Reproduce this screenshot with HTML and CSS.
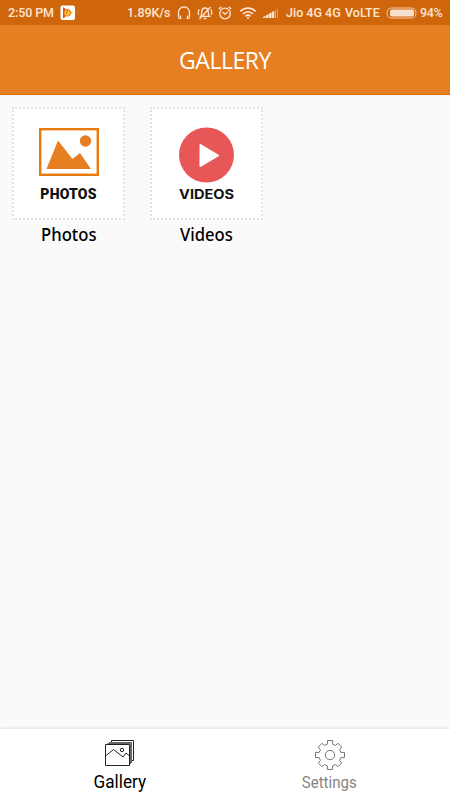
FILE: index.html
```html
<!DOCTYPE html>
<html lang="en">
<head>
<meta charset="utf-8">
<title>Gallery</title>
<link rel="stylesheet" href="styles.css">
</head>
<body>
<div class="status">
  <span class="time">2:50 PM</span>
  <svg class="player" width="16" height="16" viewBox="0 0 16 16"><rect x=".5" y=".5" width="14.5" height="14.5" rx="2" fill="#fff"/><path d="M3 2.3L13.2 7.8L3 13.2Z" fill="#f8bf23"/><path d="M3 2.3L5 3.6V12L3 13.2Z" fill="#e8402c"/><circle cx="7.2" cy="7.8" r="3.2" fill="#fbd12c" stroke="#ee7b22" stroke-width="1.2"/><path d="M6.7 9V6.7L8.4 6.2" fill="none" stroke="#e66420"/></svg>
  <span class="speed">1.89K/s</span>
  <svg class="icon headset" width="14" height="14" viewBox="0 0 14 14"><path d="M1.500 11.500V6.500C1.500 3 4 1 7 1s5.500 2 5.500 5.500V11.500"/><path d="M1.500 12.300h3M3.500 9.500v3M12.500 12.300h-3M10.500 9.500v3"/></svg>
  <svg class="icon muted" width="16" height="14" viewBox="0 0 16 14"><path d="M3.600 10.400H12.400C11.200 9.200 11.500 7.500 11.200 5.500C11 3.200 9.800 2 8 2S5 3.200 4.800 5.500C4.500 7.500 4.800 9.200 3.600 10.400ZM6.700 12.500h2.600M2.300 3.500C1 5.300 1 7.200 1.800 9M13.700 3.500c1.300 1.800 1.300 3.700.5 5.500M2.500 13L13.500 1"/></svg>
  <svg class="icon alarm" width="14" height="14" viewBox="0 0 14 14"><circle cx="7" cy="7.500" r="5.300"/><path d="M4.500 6l2.400 2.200L9.700 6M.8 3L3.500 .8M13.200 3L10.500 .8"/></svg>
  <svg class="icon wifi" width="18" height="14" viewBox="0 0 18 14"><path d="M1.300 5.500C5.500 .9 12.500 .9 16.700 5.500M4 8c2.800-3 7.200-3 10 0M6.500 10.300c1.500-1.400 3.500-1.400 5 0" stroke-width="1.700"/><circle cx="9" cy="12" r="1" fill="#fce5d2" stroke="none"/></svg>
  <svg class="signal" width="16" height="12" viewBox="0 0 16 12"><path d="M0 11V10L2.600 8.800V11ZM3 11V8.500L5.600 7V11ZM6 11V6.800L8.600 5.300V11ZM9 11V5L11.300 3.700V11Z" fill="#fce5d2"/><path d="M12 11V3l1-.5V11ZM14 11V1.700l1-.7v10Z" fill="#e4a06c"/></svg>
  <span class="carrier">Jio 4G 4G</span>
  <span class="volte">VoLTE</span>
  <svg class="battery" width="32" height="12" viewBox="0 0 32 12"><rect x="1" y="1" width="29" height="10" rx="4.500" fill="none" stroke="#f4cda9"/><rect x="4" y="2.500" width="24" height="7" rx="2" fill="#f9e0cc"/></svg>
  <span class="percent">94%</span>
</div>
<header class="header"><h1 class="title">GALLERY</h1></header>
<main class="grid">
  <div class="item">
    <div class="tile">
      <svg class="photo" width="60" height="48" viewBox="0 0 60 48"><rect x="1.200" y="1.200" width="57.600" height="45.600" fill="#fff" stroke="#e67a0f" stroke-width="2.400"/><path d="M7.500 41L19 12.500L33.500 31L41 25L52 41Z" fill="#e67e22"/><circle cx="46.500" cy="13" r="5.700" fill="#e67e22"/></svg>
      <span class="caption photos-caption">PHOTOS</span>
    </div>
    <span class="label">Photos</span>
  </div>
  <div class="item">
    <div class="tile">
      <svg class="video" width="56" height="56" viewBox="0 0 56 56"><circle cx="27.500" cy="28" r="27.500" fill="#e75757"/><path d="M21.500 18v21L39 28.500Z" fill="#fff" stroke="#fff" stroke-width="2" stroke-linejoin="round"/></svg>
      <span class="caption videos-caption">VIDEOS</span>
    </div>
    <span class="label">Videos</span>
  </div>
</main>
<nav class="tabs">
  <div class="tab active">
    <svg width="32" height="30" viewBox="0 0 32 30" fill="none" stroke="#222"><path d="M5.500 4V2.500H27.500V22.500H26M3.500 5V4H5M7.500 2V.5H29.500V20.500H28"/><path d="M5 2.500H27.500V23M3.500 3.500H26.500V24" stroke="#666"/><path d="M1.500 4.500H25.500V25.500H1.500ZM1.500 16L9.500 9.500L19 17L22 13L25.500 16"/><circle cx="18" cy="10" r="1.700"/></svg>
    <span class="tab-label">Gallery</span>
  </div>
  <div class="tab settings">
    <svg width="32" height="30" viewBox="-16 -15 32 30" fill="none" stroke="#777"><path stroke-linejoin="round" d="M-2.600-14.500H2.600V-10.800L5.400-9.600L8-11.700L11.700-8L9.600-5.400L10.800-2.600H14.500V2.600H10.800L9.600 5.400L11.700 8L8 11.700L5.400 9.600L2.600 10.800V14.500H-2.600V10.800L-5.400 9.600L-8 11.700L-11.700 8L-9.600 5.400L-10.800 2.600H-14.500V-2.600H-10.800L-9.600-5.400L-11.700-8L-8-11.700L-5.400-9.600L-2.600-10.800Z"/><circle r="4.700"/></svg>
    <span class="tab-label">Settings</span>
  </div>
</nav>
</body>
</html>
```
FILE: styles.css
```css
* { box-sizing: border-box; }
body {
  margin: 0;
  height: 800px;
  display: flex;
  flex-direction: column;
  overflow: hidden;
  background: #fafafa;
  font-family: Roboto, sans-serif;
}
svg { display: block; flex: none; }

.status {
  height: 25px;
  flex: none;
  display: flex;
  align-items: center;
  padding-left: 8px;
  background: #cf660c;
  color: #fce5d2;
  font-size: 12.5px;
  font-weight: 500;
  line-height: 27px;
  white-space: nowrap;
}
.status span { flex: none; }
.time { width: 52px; letter-spacing: -.1px; }
.player { margin-right: 51px; }
.speed { width: 50px; letter-spacing: -.1px; }
.icon { fill: none; stroke: #fce5d2; stroke-width: 1.3; }
.headset { margin-right: 6px; }
.muted { margin-right: 5px; }
.alarm { margin-right: 7px; }
.wifi { margin-right: 6px; }
.signal { margin-right: 7px; }
.carrier { width: 59px; }
.volte { width: 41px; }
.battery { margin-right: 2px; }
.percent { letter-spacing: -.3px; }

.header {
  height: 70px;
  flex: none;
  display: flex;
  justify-content: center;
  background: #e67e22;
  border-bottom: 1px solid #e06c08;
}
.title {
  margin: 0;
  color: #fff;
  font: 400 23px/71px "Open Sans", sans-serif;
  letter-spacing: -.45px;
}

.grid {
  flex: 1;
  display: flex;
  align-items: flex-start;
  gap: 25px;
  padding: 12px;
}
.item {
  width: 113px;
  display: flex;
  flex-direction: column;
  align-items: center;
}
.tile {
  width: 113px;
  height: 113px;
  display: flex;
  flex-direction: column;
  align-items: center;
  background: #fff;
  border: 2px dotted #e2e2e2;
}
.photo { margin-top: 19px; }
.video { margin-top: 18px; }
.caption { color: #111; white-space: nowrap; }
.photos-caption {
  margin-top: 9px;
  font: 900 14px/18px Roboto, sans-serif;
  letter-spacing: .2px;
}
.videos-caption {
  margin-top: 2px;
  font: 700 13px/18px Inter, sans-serif;
  transform: scaleX(1.12);
}
.label {
  margin-top: 2px;
  color: #000;
  font: 500 18.5px/24px "Noto Sans", sans-serif;
  transform: scaleX(.9);
}

.tabs {
  height: 71px;
  flex: none;
  display: flex;
  padding: 0 14px;
  background: #fff;
  box-shadow: 0 -1px 3px rgba(0, 0, 0, .1);
}
.tab {
  width: 211px;
  display: flex;
  flex-direction: column;
  align-items: center;
  padding-top: 11px;
  color: #858585;
}
.active { color: #000; }
.settings { width: 209px; }
.tab-label {
  font-size: 16px;
  line-height: 26px;
  transform: scaleX(.94);
}
.active .tab-label {
  font-size: 17.5px;
  line-height: 24px;
  transform: scaleX(.98);
}
```
